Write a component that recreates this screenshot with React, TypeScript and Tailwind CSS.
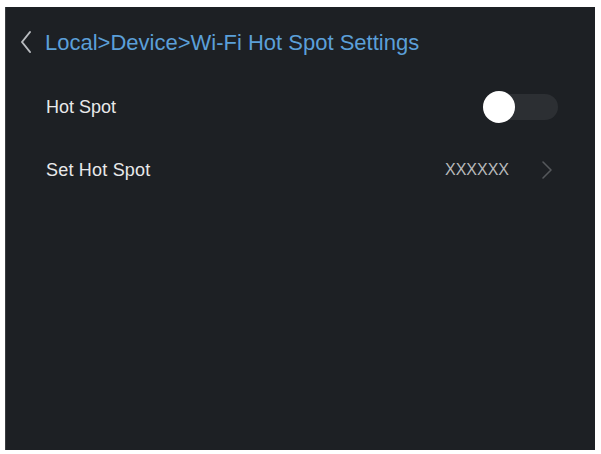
import React from 'react';

const font = { fontFamily: '"Liberation Sans", Arial, sans-serif' };

export default function App() {
  return (
    <div className="w-[601px] h-[454px] bg-white pl-[5px] pr-[6px] pt-[7px] pb-[4px]" style={font}>
      <div className="w-full h-full bg-[#1d2024] border-l border-[#3a3d40] flex flex-col">
        {/* breadcrumb header */}
        <div className="flex items-center h-[70px] pl-[13px]">
          <svg width="14" height="24" viewBox="0 0 14 24" className="text-[#b9bcc0]">
            <path d="M11 2 L3 12 L11 22" fill="none" stroke="currentColor" strokeWidth="2" strokeLinecap="round" strokeLinejoin="round" />
          </svg>
          <span className="ml-[12px] text-[22px] text-[#5b9fd8]">
            Local&gt;Device&gt;Wi-Fi Hot Spot Settings
          </span>
        </div>

        {/* Hot Spot toggle row */}
        <div className="flex items-center justify-between h-[60px] pl-[40px] pr-[37px]">
          <span className="text-[18px] text-[#e8e9ea]">Hot Spot</span>
          <div className="relative w-[75px] h-[26px] rounded-full bg-[#2c2f33]">
            <div className="absolute left-0 top-[-3px] w-[32px] h-[32px] rounded-full bg-white" />
          </div>
        </div>

        {/* Set Hot Spot row */}
        <div className="flex items-center justify-between h-[66px] pl-[40px] pr-[42px]">
          <span className="text-[18px] tracking-[0.2px] text-[#e8e9ea]">Set Hot Spot</span>
          <div className="flex items-center gap-[32px]">
            <span className="text-[16px] text-[#b7b9bb]">XXXXXX</span>
            <svg width="12" height="20" viewBox="0 0 12 20" className="text-[#55585c]">
              <path d="M2 2 L10 10 L2 18" fill="none" stroke="currentColor" strokeWidth="1.6" strokeLinecap="round" strokeLinejoin="round" />
            </svg>
          </div>
        </div>
      </div>
    </div>
  );
}
